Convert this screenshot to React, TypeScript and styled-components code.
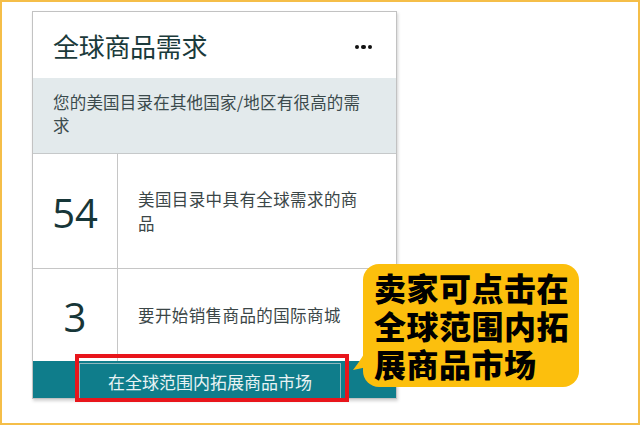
import React from 'react';
import styled, {createGlobalStyle} from "styled-components";

const GlobalStyle = createGlobalStyle`
    html, body {
        margin: 0;
        padding: 0;
        background: #ffffff;
    }
    body {
        font-family: "Noto Sans", "Noto Sans CJK SC", sans-serif;
    }
`

const rows = [
    {value: '54', text: '美国目录中具有全球需求的商品'},
    {value: '3', text: '要开始销售商品的国际商城'},
];

export default function App() {
    return (
        <>
            <GlobalStyle/>
            <Frame>
                <Card>
                    <Header>
                        <Title>全球商品需求</Title>
                        <More aria-label="more"><i/><i/><i/></More>
                    </Header>
                    <Descr>您的美国目录在其他国家/地区有很高的需求</Descr>
                    {rows.map((row, i) => (
                        <Row key={row.value} tall={i === 0}>
                            <Value>{row.value}</Value>
                            <RowText>{row.text}</RowText>
                        </Row>
                    ))}
                    <ActionBar>
                        <ActionButton>在全球范围内拓展商品市场</ActionButton>
                    </ActionBar>
                </Card>
                <Highlight/>
                <Callout>
                    <Tail width="30" height="60" viewBox="0 0 30 60">
                        <path d="M22 4 C20 20 14 34 0 52 C10 50 18 48 28 46 Z" fill="#FCBF0D"/>
                    </Tail>
                    <CalloutText>卖家可点击在全球范围内拓展商品市场</CalloutText>
                </Callout>
            </Frame>
        </>
    );
}

const Frame = styled.div`
    position: relative;
    box-sizing: border-box;
    width: 640px;
    height: 425px;
    border: 2px solid #F5BE48;
    padding: 9px 0 0 30px;
    background: #fff;
`
const Card = styled.div`
    width: 363px;
    border: 1px solid #c2c2c2;
    box-shadow: 1px 2px 3px rgba(0, 0, 0, 0.18);
    background: #fff;
    display: flex;
    flex-direction: column;
    font-family: "Noto Sans CJK SC", sans-serif;
`
const Header = styled.div`
    height: 66px;
    display: flex;
    align-items: center;
    justify-content: space-between;
    padding: 0 24px 0 20px;
`
const Title = styled.h2`
    margin: 0;
    font-size: 26px;
    font-weight: 400;
    color: #1b3a3b;
    letter-spacing: -0.3px;
`
const More = styled.span`
    display: flex;
    gap: 2px;
    margin-top: 4px;
    i {
        display: block;
        width: 4.5px;
        height: 4.5px;
        border-radius: 50%;
        background: #111;
    }
`
const Descr = styled.div`
    box-sizing: border-box;
    height: 76px;
    padding: 13px 24px 0 20px;
    background: #E3EAEC;
    border-bottom: 1px solid #c6c9ca;
    font-size: 16.5px;
    line-height: 23px;
    color: #3b4a4c;
    letter-spacing: 0.2px;
`
const Row = styled.div<{ tall?: boolean }>`
    display: grid;
    grid-template-columns: 85px 1fr;
    height: ${p => p.tall ? 115 : 92}px;
    border-bottom: ${p => p.tall ? '1px solid #c6c6c6' : 'none'};
    box-sizing: border-box;
`
const Value = styled.div`
    display: flex;
    align-items: center;
    justify-content: center;
    border-right: 1px solid #c6c6c6;
    font-family: "Open Sans", "Noto Sans", sans-serif;
    font-size: 40px;
    color: #173638;
    padding-top: 2px;
`
const RowText = styled.div`
    display: flex;
    align-items: center;
    padding: 0 30px 0 20px;
    font-size: 16.5px;
    line-height: 24px;
    color: #3b4647;
    letter-spacing: 0.4px;
`
const ActionBar = styled.div`
    height: 37px;
    background: #0F7D8B;
    display: flex;
    align-items: center;
    justify-content: flex-start;
    padding-left: 46px;
`
const ActionButton = styled.div`
    box-sizing: border-box;
    width: 262px;
    height: 38px;
    margin-top: 4px;
    display: flex;
    align-items: center;
    justify-content: center;
    font-size: 17px;
    color: #e8f3f4;
    border: 1px solid #8fb7bd;
`
const Highlight = styled.div`
    position: absolute;
    left: 73px;
    top: 352px;
    width: 274px;
    height: 48px;
    border: 4px solid #E8151B;
    box-sizing: border-box;
`
const Callout = styled.div`
    position: absolute;
    left: 361px;
    top: 262px;
    width: 216px;
    height: 123px;
    border-radius: 16px;
    background: #FCBF0D;
`
const Tail = styled.svg`
    position: absolute;
    left: -10px;
    top: 54px;
`
const CalloutText = styled.div`
    position: relative;
    padding: 4px 6px 0 11px;
    font-family: "Noto Sans CJK SC", sans-serif;
    font-weight: 900;
    font-size: 32px;
    line-height: 38px;
    color: #000;
    letter-spacing: 0.5px;
`
